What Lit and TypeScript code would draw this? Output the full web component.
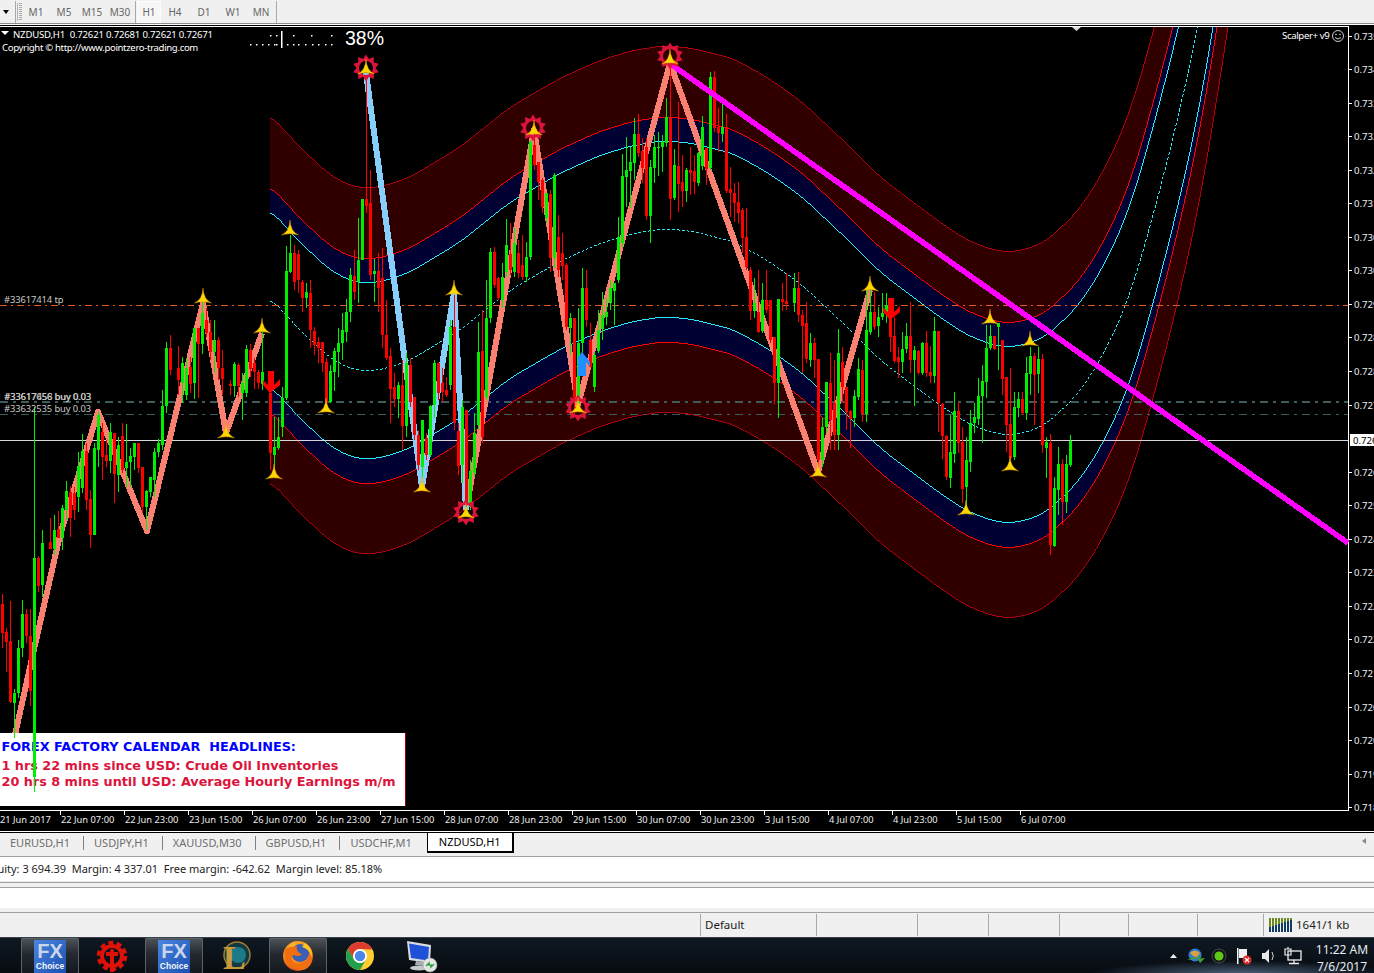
import {LitElement, html, svg, css} from 'lit';
import {customElement} from 'lit/decorators.js';

type Candle = {up: boolean; x: number; wt: number; bt: number; bb: number; wb: number};

// rows read off 3x crops: colour, crop x, wick top, body top, body bottom, wick bottom
function region(ox: number, oy: number, rows: string): Candle[] {
  return rows
    .trim()
    .split('\n')
    .map((row) => {
      const p = row.trim().split(/\s+/);
      const [zx, wt, bt, bb, wb] = p.slice(1).map(Number);
      const k = Math.round((ox + zx / 3 - 2.5) / 4);
      return {
        up: p[0] === 'g',
        x: 2 + 4 * k,
        wt: Math.round(oy + wt / 3),
        bt: Math.round(oy + bt / 3),
        bb: Math.round(oy + bb / 3),
        wb: Math.round(oy + wb / 3),
      };
    });
}

const CANDLES: Candle[] = [
  ...region(0, 480, `
    r 8 342 372 458 505
    r 19 445 457 485 575
    r 31 363 483 665 670
    g 43 627 638 668 775
    g 55 480 503 640 655
    g 67 360 402 505 530
    r 79 388 402 467 490
    r 91 388 467 633 678
    g 103 -219 233 891 935
    r 115 228 233 317 335
    g 127 150 190 315 350
    r 151 113 186 208 208
    g 163 105 150 207 225
    r 175 93 147 175 175
    g 187 75 85 175 210
    g 199 3 33 90 120`),
  ...region(0, 280, `
    r 211 617 635 715 770
    r 223 620 640 690 720
    g 235 515 558 650 695
    g 247 462 512 625 640
    r 259 490 512 660 690
    r 271 630 658 765 803
    g 283 490 505 765 765
    g 295 395 405 510 560
    r 307 430 455 530 600
    r 319 480 525 543 560
    g 331 430 455 543 580
    r 343 458 460 583 670
    g 355 470 495 585 635
    r 367 430 467 570 580
    g 379 432 545 565 620
    g 391 505 527 545 620
    g 403 490 490 530 570
    r 415 490 490 565 580
    r 427 560 560 680 700
    g 439 630 632 680 750
    g 451 590 590 635 650
    g 463 505 515 600 650
    g 475 478 490 515 530
    g 487 330 378 495 510
    g 499 185 205 378 400
    r 511 165 205 270 285
    r 535 197 263 300 345
    g 547 230 250 310 370
    g 559 235 265 345 360
    r 571 232 262 312 340
    g 583 145 145 310 358
    r 595 143 145 192 355
    g 607 60 100 192 222
    r 619 85 120 160 170
    r 631 120 155 215 240
    g 643 120 180 215 280
    r 655 170 180 265 300
    r 667 210 265 297 345
    r 691 300 312 318 345
    g 703 245 253 318 350
    r 715 250 255 318 350
    g 727 280 310 340 420
    g 739 195 208 338 350
    r 751 192 210 268 290
    r 763 235 250 275 328
    r 775 270 275 308 328
    g 787 155 275 312 330
    r 812 295 340 520 570`),
  ...region(260, 280, `
    g 44 410 500 525 575
    g 56 410 470 505 510
    g 68 320 355 440 470
    g 80 -103 -28 355 360
    g 92 -135 -80 -25 -20
    r 104 -105 -80 5 30
    r 116 -90 -78 0 40
    r 128 0 5 55 95
    g 140 10 35 55 85
    r 152 0 40 150 205
    r 164 140 152 195 225
    r 176 170 185 205 250
    r 188 185 185 250 275
    r 200 235 245 368 395
    g 212 255 272 365 370
    g 224 205 212 277 332
    g 236 145 190 217 290
    g 248 100 150 190 240
    g 260 58 97 155 185
    g 272 -35 -15 95 125
    r 284 -90 -12 35 60
    g 296 -185 -60 5 68
    g 307 -243 -243 -60 -60
    r 320 -605 -243 -223 -200
    r 332 -330 -230 -15 0
    g 344 -62 -28 -18 65
    r 356 -80 -28 25 95
    r 367 -95 -5 165 205
    r 379 60 165 235 240
    r 391 205 228 328 430
    r 403 280 322 357 380
    g 415 305 315 358 415
    r 427 240 315 437 510
    g 439 220 250 437 470
    r 451 235 255 365 380
    r 463 350 350 465 480
    r 475 450 465 555 570
    g 487 420 420 560 590
    r 499 460 475 525 540
    g 511 375 378 525 530
    g 523 240 250 375 415
    r 535 250 250 338 360
    r 547 265 310 335 365
    r 559 290 330 345 350
    g 571 120 140 315 330
    r 583 45 140 430 450
    r 595 430 452 558 585
    g 607 360 380 555 610
    r 619 390 390 670 680
    g 631 540 572 680 690
    g 643 400 460 580 590
    g 655 125 215 435 450
    r 667 90 212 470 490
    g 679 0 113 350 360
    g 691 -95 -83 115 130
    r 703 -100 -83 15 25
    r 715 -10 -5 55 60
    g 727 -50 -10 60 85
    g 739 -183 -105 -25 -10
    r 751 -170 -78 -30 -15
    g 763 -155 -110 -25 -10
    r 775 -120 -80 -20 -5
    r 787 -135 -45 -10 0
    g 799 -115 -70 -10 5
    g 811 -420 -415 -68 -60
    r 823 -440 -405 -345 -330
    r 835 -355 -355 -295 -240
    r 847 -305 -300 -218 -200
    g 859 -260 -260 -185 -170
    r 871 -270 -258 -65 -25
    g 883 -320 -315 -65 -35
    r 895 -195 -130 -30 -10
    r 907 -142 -80 -42 0
    r 919 -50 -45 140 150
    g 931 100 115 145 225
    r 943 115 115 355 410
    g 955 85 190 370 385
    g 967 -35 25 190 230
    r 979 -30 25 120 140
    r 991 130 180 260 260
    g 1003 215 225 320 335`),
  ...region(595, 270, `
    g 10 120 180 243 250
    g 22 65 135 178 210
    g 34 85 125 140 165
    g 46 30 55 98 120
    g 58 38 38 62 165`),
  ...region(600, 40, `
    g 55 530 590 720 730
    g 67 343 408 610 620
    g 79 290 390 410 500
    g 91 320 365 392 505
    g 103 235 282 368 420
    r 115 222 282 340 350
    r 127 295 333 385 430
    r 139 295 320 527 540
    g 151 360 380 527 610
    g 163 285 322 385 430
    g 175 275 322 325 407
    g 187 285 305 322 395
    g 199 175 230 308 320
    r 211 70 230 477 540
    g 223 327 375 475 480
    r 235 185 378 432 515
    r 247 345 425 452 500
    g 259 385 390 452 485
    r 271 320 390 400 465
    r 283 345 392 427 462
    g 295 335 338 430 437
    g 307 228 262 378 390
    r 319 325 325 388 435
    g 331 95 110 385 390
    r 343 92 110 265 275
    r 355 205 262 280 335
    g 367 183 260 282 305
    r 379 222 262 453 460
    r 391 380 447 460 530
    r 403 430 460 488 545
    r 415 425 487 520 550
    r 427 505 510 595 640
    r 439 505 592 680 690`),
  ...region(595, 270, `
    r 465 -10 0 122 150
    g 477 25 100 122 145
    r 490 0 125 185 190
    g 502 40 90 183 190
    r 514 0 90 120 130
    r 526 90 90 210 220
    r 538 200 200 338 402
    g 550 87 87 338 445`),
  ...region(780, 260, `
    r 8 70 118 125 152
    r 20 40 122 132 150
    g 44 40 85 130 155
    r 56 35 85 165 185
    r 68 150 165 197 340
    r 80 125 190 298 310
    g 92 220 250 300 320
    r 104 235 250 300 355
    r 116 297 297 600 630
    g 128 475 500 600 620
    g 140 365 365 500 520
    r 152 280 370 480 570
    r 164 300 430 525 570
    g 176 208 280 525 570
    r 188 262 307 380 430
    r 200 380 380 455 510
    r 212 450 452 478 563
    g 224 390 408 475 500
    g 236 295 327 410 420
    r 248 300 330 462 485
    g 260 85 210 462 485
    g 272 85 155 215 225
    r 284 95 155 202 210
    g 296 140 170 197 230
    g 308 100 160 170 180
    g 320 100 135 160 190
    r 332 115 115 230 275
    r 344 170 228 302 310
    r 356 260 292 305 355
    g 368 215 267 305 340
    g 380 190 228 267 280
    r 392 125 228 300 340
    g 404 258 270 300 437
    r 416 270 272 340 345
    g 428 245 250 340 345
    r 440 212 250 340 350
    r 452 258 335 347 370
    g 464 170 212 347 370
    r 476 212 212 430 515
    r 488 430 432 527 597
    r 500 525 527 650 660
    g 512 465 575 655 683
    g 524 395 452 582 610
    r 536 425 452 550 580
    r 548 500 545 687 730
    g 560 530 600 680 760
    g 572 450 490 605 635
    g 584 430 470 490 520
    g 596 355 407 477 495
    g 608 315 362 408 550
    g 620 195 265 365 415
    g 632 195 228 265 270
    r 644 228 228 267 270
    g 656 190 190 200 330
    r 668 240 240 357 405
    r 680 352 352 495 575
    r 692 325 492 595 600
    g 704 395 440 592 600
    g 716 395 417 445 470
    r 728 395 417 460 465
    g 740 290 340 460 480
    g 752 262 288 342 405
    r 764 280 288 345 495
    g 776 260 297 342 400
    r 788 282 297 555 580
    g 800 530 545 563 655
    r 812 522 550 855 885
    g 824 650 685 857 860
    g 836 562 612 690 765
    r 848 598 612 725 795
    g 860 585 612 725 760
    g 872 525 542 615 620`),
];

// centre line of the channel; every band curve is this plus a fixed offset
const MID: [number, number][] = [
  [270, 297], [293, 323], [327, 356], [353, 370], [380, 370], [410, 360], [460, 330], [510, 290],
  [560, 261], [600, 243], [633, 233], [665, 228], [693, 231], [733, 241], [767, 260], [800, 283],
  [847, 327], [880, 360], [937, 403], [967, 423], [997, 434], [1020, 434], [1047, 424], [1080, 392],
  [1105, 352], [1130, 296], [1155, 209], [1170, 150], [1180, 110], [1200, 18], [1213, -60], [1228, -155], [1245, -270],
];

function midAt(x: number): number {
  let i = 0;
  while (i < MID.length - 2 && MID[i + 1][0] < x) i++;
  const a = MID[i];
  const b = MID[i + 1];
  return a[1] + ((x - a[0]) / (b[0] - a[0])) * (b[1] - a[1]);
}

// knots are joined straight, then averaged over a window so no corners stay visible
function smoothAt(x: number): number {
  let sum = 0;
  for (let d = -12; d <= 12; d++) sum += midAt(Math.max(x + d, 270));
  return sum / 25;
}

const XS = Array.from({length: 976}, (_, i) => 270 + i);
const SMOOTH = XS.map(smoothAt);
const curve = (off: number) => XS.map((x, i) => [x, Math.round(SMOOTH[i] + off)]);
const line = (off: number) => curve(off).map((p) => p.join(',')).join(' ');
const band = (a: number, b: number) =>
  [...curve(a), ...curve(b).reverse()].map((p) => p.join(',')).join(' ');

const PRICES = [
  '0.73520', '0.73450', '0.73390', '0.73320', '0.73250', '0.73180', '0.73050', '0.73000',
  '0.72950', '0.72880', '0.72810', '0.72740', '', '0.72610', '0.72540', '0.72470',
  '0.72330', '0.72270', '0.72200', '0.72130', '0.72060', '0.72000', '0.71930', '0.71860',
];
const TIMES = [
  '22 Jun 07:00', '22 Jun 23:00', '23 Jun 15:00', '26 Jun 07:00', '26 Jun 23:00', '27 Jun 15:00',
  '28 Jun 07:00', '28 Jun 23:00', '29 Jun 15:00', '30 Jun 07:00', '30 Jun 23:00', '3 Jul 15:00',
  '4 Jul 07:00', '4 Jul 23:00', '5 Jul 15:00', '6 Jul 07:00',
];
const ARROWS: [number, number][] = [
  [203, 303], [262, 333], [290, 235], [326, 413], [226, 438], [274, 479], [454, 295], [422, 492],
  [366, 74], [534, 135], [466, 518], [578, 413], [670, 64], [818, 477], [870, 291], [990, 324],
  [1030, 346], [966, 515], [1010, 471],
];
const STARS: [number, number][] = [[366, 68], [533, 128], [466, 512], [578, 408], [670, 56]];
const DOTS = [250, 256, 262, 268, 274, 276, 287, 293, 298, 305, 312, 318, 325, 331];
const DOT_TOPS = [270, 276, 293, 311, 331];
const ZIGZAGS = [
  '15,735 35,645 60,535 98,412 147,531 203,303 226,433 262,333',
  '466,510 534,130 578,405 670,63 818,472 870,290',
];

function starPath(cx: number, cy: number): string {
  let d = '';
  for (let i = 0; i < 20; i++) {
    const r = i % 2 ? 9.5 : 13.5;
    const a = (i * Math.PI) / 10 - Math.PI / 2;
    d += `${i ? 'L' : 'M'}${(cx + r * Math.cos(a)).toFixed(1)},${(cy + r * Math.sin(a)).toFixed(1)}`;
  }
  return `${d}Z M${cx - 7},${cy} a7,7 0 1,0 14,0 a7,7 0 1,0 -14,0Z`;
}

@customElement('app-root')
export class AppRoot extends LitElement {
  static override styles = css`
    :host {
      display: block;
      width: 1374px;
      height: 973px;
      overflow: hidden;
      background: #f0f0f0;
      font-family: 'Noto Sans', sans-serif;
      font-size: 11px;
      color: #222;
    }

    .toolbar {
      display: flex;
      align-items: center;
      height: 23px;
      border-bottom: 1px solid #8c8c8c;
      box-shadow: 0 1px 0 #fff;
      margin-bottom: 1px;
    }
    .drop {
      width: 0;
      height: 0;
      margin: 0 5px 0 3px;
      border: 3.5px solid transparent;
      border-top: 4px solid #000;
      border-bottom: 0;
    }
    .grip {
      width: 4px;
      height: 18px;
      border-left: 1px solid #b4b4b4;
      background: repeating-linear-gradient(#aaa 0 1px, transparent 1px 2px) 1px 0 / 3px 100% no-repeat;
    }
    .tf {
      text-align: center;
      color: #666;
      font-size: 10px;
      line-height: 22px;
      height: 22px;
      box-sizing: border-box;
    }
    .tf.on {
      background: #f6f6f6;
      box-shadow: inset 0 0 0 1px #fdfdfd;
    }
    .tsep {
      width: 1px;
      height: 22px;
      background: #a8a8a8;
      margin: 0 1px;
    }

    .chart {
      height: 806px;
      background: #000;
      border-bottom: 1px solid #fff;
    }
    .chart svg {
      display: block;
    }
    .c {
      fill: #fff;
      font-size: 9.6px;
      letter-spacing: -0.2px;
      white-space: pre;
    }
    .c.tight {
      letter-spacing: -0.35px;
    }
    .axis {
      fill: #eee;
      font-size: 9.6px;
    }
    .axis.time {
      font-size: 9.3px;
    }
    .axis.on {
      fill: #000;
    }
    .order {
      fill: #c8c8c8;
      font-size: 9.4px;
      letter-spacing: -0.1px;
    }
    .pct {
      fill: #fff;
      font-family: 'Liberation Sans', sans-serif;
      font-size: 19.5px;
    }
    .news {
      font-family: 'DejaVu Sans', sans-serif;
      font-size: 12.8px;
      font-weight: 700;
      white-space: pre;
    }

    .tabs {
      display: flex;
      height: 25px;
      box-sizing: border-box;
      border-top: 1px solid #000;
      border-bottom: 1px solid #a0a0a0;
    }
    .tab {
      height: 14px;
      margin-top: 3px;
      padding: 0 13px 0 10px;
      line-height: 13px;
      color: #6e6e6e;
      border-right: 1px solid #808080;
    }
    .tab.last {
      border-right: 0;
      padding-right: 15px;
    }
    .tab.on {
      height: 18px;
      margin-top: 0;
      padding: 0 11px;
      line-height: 18px;
      background: #fff;
      color: #000;
      border: 1px solid #000;
      border-width: 0 2px 2px 1px;
    }
    .scroll {
      margin: 5px 8px 0 auto;
      width: 0;
      height: 0;
      border: 3px solid transparent;
      border-right: 4px solid #888;
      border-left: 0;
    }

    .account {
      height: 25px;
      background: #fff;
      border-bottom: 1px solid #ededed;
      box-sizing: border-box;
      line-height: 23px;
      white-space: pre;
      overflow: hidden;
      color: #222;
    }
    .account span {
      margin-left: -15.5px;
      display: inline-block;
    }
    .gap {
      height: 4px;
      border-top: 1px solid #a0a0a0;
      border-bottom: 1px solid #a0a0a0;
    }
    .blank {
      height: 20px;
      background: #fff;
      border-bottom: 1px solid #ededed;
    }
    .gap2 {
      height: 3px;
      border-bottom: 1px solid #a0a0a0;
    }

    .status {
      display: flex;
      height: 24px;
      align-items: center;
      background: #f0f0f0;
    }
    .cell {
      height: 22px;
      line-height: 22px;
      box-sizing: border-box;
      border-left: 1px solid #a8a8a8;
      padding-left: 4px;
      font-size: 11.5px;
    }
    .net {
      display: flex;
      align-items: center;
      gap: 3px;
      padding-left: 5px;
    }

    .taskbar {
      display: flex;
      height: 36px;
      padding-left: 21px;
      gap: 4px;
      background:
        radial-gradient(ellipse 150px 13px at 1240px 36px, rgba(98, 128, 160, 0.75), transparent),
        linear-gradient(#0f1922, #070b10);
      border-top: 1px solid #39424c;
      box-sizing: border-box;
    }
    .task {
      width: 58px;
      height: 36px;
      display: flex;
      justify-content: center;
      align-items: center;
    }
    .task.on {
      background: linear-gradient(#4d5358, #23292f 45%, #12181e);
      box-shadow: inset 0 0 0 1px #5c6268;
      border-radius: 2px;
    }
    .task svg {
      display: block;
    }
    .fx {
      fill: #ccd6ea;
      font-family: 'Liberation Sans', sans-serif;
      font-size: 20px;
      font-weight: 700;
    }
    .choice {
      fill: #f4f6fa;
      font-family: 'Liberation Sans', sans-serif;
      font-size: 8.5px;
      font-weight: 700;
    }
    .lol {
      fill: #c99a3c;
      font-family: 'Liberation Serif', serif;
      font-size: 34px;
      font-weight: 700;
    }
    .tray {
      margin-left: auto;
      display: flex;
      align-items: center;
      height: 35px;
    }
    .clock {
      width: 64px;
      padding-top: 4px;
      text-align: center;
      color: #e6ecf2;
      font-size: 12px;
      line-height: 17px;
    }
  `;

  private renderBands() {
    return svg`
      <g clip-path="url(#plot)" fill="none">
        <polygon points=${band(-183, -112)} fill="#300000" />
        <polygon points=${band(-112, -88)} fill="#000033" />
        <polygon points=${band(88, 113)} fill="#000033" />
        <polygon points=${band(113, 183)} fill="#300000" />
        <polyline points=${line(-183)} stroke="#b0000f" />
        <polyline points=${line(-112)} stroke="#ff0000" />
        <polyline points=${line(-88)} stroke="#22eeff" />
        <polyline points=${line(0)} stroke="#22eeff" stroke-dasharray="3 2" />
        <polyline points=${line(88)} stroke="#22eeff" />
        <polyline points=${line(113)} stroke="#ff0000" />
        <polyline points=${line(183)} stroke="#b0000f" />
      </g>
    `;
  }

  private renderCandles() {
    return CANDLES.map((c) => {
      const fill = c.up ? '#00ee00' : '#ff0000';
      return svg`
        <rect x=${c.x} y=${c.wt} width="1" height=${Math.max(c.wb - c.wt, 1)} fill=${fill} />
        <rect x=${c.x - 1} y=${c.bt} width="3" height=${Math.max(c.bb - c.bt, 1)} fill=${fill} />
      `;
    });
  }

  private renderChart() {
    return html`
      <svg width="1374" height="806" viewBox="0 25 1374 806">
        <defs>
          <clipPath id="plot"><rect x="0" y="27" width="1348" height="783" /></clipPath>
        </defs>
        <rect x="0" y="26" width="1349" height="1" fill="#fff" />
        <rect x="1348" y="26" width="1" height="785" fill="#fff" />
        <rect x="0" y="810" width="1349" height="1" fill="#fff" />
        <g shape-rendering="crispEdges">
          ${this.renderBands()}
          <line x1="0" x2="1348" y1="305.5" y2="305.5" stroke="#e05a20" stroke-dasharray="7 4 2 4" />
          <line x1="0" x2="1348" y1="402" y2="402" stroke="#3d5c5c" stroke-width="2" stroke-dasharray="8 5 3 5" />
          <line x1="0" x2="1348" y1="414.5" y2="414.5" stroke="#3d5c5c" stroke-dasharray="8 5 3 5" />
          <line x1="0" x2="1348" y1="440.5" y2="440.5" stroke="#d8d8d8" />
          ${ZIGZAGS.map(
            (p) => svg`
              <polyline points=${p} fill="none" stroke="#fa8072" stroke-width="6" stroke-linejoin="round" />
            `
          )}
          <polyline
            points="366,73 422,487 454,293 466,510"
            fill="none"
            stroke="#87cefa"
            stroke-width="6"
            stroke-linejoin="round"
          />
          <rect x="0" y="733" width="405" height="73" fill="#fff" />
          <rect x="405" y="733" width="1" height="73" fill="#a00000" />
          <text class="news" x="1.5" y="751" fill="#0000ff">FOREX FACTORY CALENDAR  HEADLINES:</text>
          <text class="news" x="1.5" y="770" fill="#dc143c">1 hrs 22 mins since USD: Crude Oil Inventories</text>
          <text class="news" x="1.5" y="786" fill="#dc143c">20 hrs 8 mins until USD: Average Hourly Earnings m/m</text>
          ${this.renderCandles()}
          <line x1="672" y1="65" x2="1348" y2="543" stroke="#ff00ff" stroke-width="5.5" />
        </g>
        <path d="M268,371H274V385L280,379V385L270,393L263,385V380L268,385Z" fill="#ff0000" />
        <path d="M888,298H894V312L900,306V312L890,320L883,312V307L888,312Z" fill="#ff0000" />
        <path d="M582,352L590,362V367L586,362V376H578V357Z" fill="#1e90ff" />
        ${STARS.map(([x, y]) => svg`<path d=${starPath(x, y)} fill="#dc143c" fill-rule="evenodd" />`)}
        ${ARROWS.map(
          ([x, y]) => svg`
            <path
              d="M${x},${y - 15}Q${x + 0.5},${y - 3.5} ${x + 8.5},${y}Q${x},${y - 2.5} ${x - 8.5},${y}Q${x - 0.5},${y - 3.5} ${x},${y - 15}Z"
              fill="#ffd700"
              stroke="#e89a00"
              stroke-width="0.4"
            />
          `
        )}
        <path d="M1,31h8l-4,4z" fill="#fff" />
        <path d="M1072,27h9l-4.5,4z" fill="#ddd" />
        <text class="c" x="13" y="38">NZDUSD,H1  0.72621 0.72681 0.72621 0.72671</text>
        <text class="c tight" x="2" y="51">Copyright © http://www.pointzero-trading.com</text>
        ${DOTS.map((x) => svg`<rect x=${x} y="44" width="1.5" height="1.5" fill="#fff" />`)}
        ${DOT_TOPS.map((x) => svg`<rect x=${x} y="35" width="1.5" height="1.5" fill="#fff" />`)}
        <rect x="281" y="31" width="1.5" height="17" fill="#fff" />
        <text class="pct" x="345" y="45">38%</text>
        <text class="c tight" x="1282" y="39">Scalper+ v9</text>
        <g fill="none" stroke="#fff" stroke-width="0.8">
          <circle cx="1338" cy="36" r="5.5" />
          <path d="M1335,37.5q3,3 6,0" />
        </g>
        <circle cx="1336" cy="34.5" r="0.7" fill="#fff" />
        <circle cx="1340" cy="34.5" r="0.7" fill="#fff" />
        <text class="order" x="4" y="303">#33617414 tp</text>
        <text class="order" x="4" y="400">#33617656 buy 0.03</text>
        <text class="order" x="4.4" y="400">#33617458 buy 0.03</text>
        <text class="order" x="4" y="412">#33632535 buy 0.03</text>
        ${PRICES.map((p, i) => {
          const y = Math.round(35.5 + 33.55 * i);
          return p
            ? svg`
                <rect x="1349" y=${y} width="3" height="1" fill="#fff" />
                <text class="axis" x="1354" y=${y + 4}>${p}</text>
              `
            : '';
        })}
        <rect x="1350" y="434" width="24" height="12" fill="#fff" />
        <text class="axis on" x="1353" y="444">0.72671</text>
        <text class="axis time" x="0" y="823">21 Jun 2017</text>
        ${TIMES.map(
          (t, i) => svg`
            <rect x=${60 + 64 * i} y="811" width="1" height="4" fill="#fff" />
            <text class="axis time" x=${61 + 64 * i} y="823">${t}</text>
          `
        )}
      </svg>
    `;
  }

  private renderFx() {
    return html`
      <svg width="32" height="33" viewBox="0 0 32 33">
        <defs>
          <linearGradient id="fxg" x1="0" y1="0" x2="1" y2="1">
            <stop offset="0" stop-color="#4a86e0" />
            <stop offset="1" stop-color="#1a4fb0" />
          </linearGradient>
        </defs>
        <rect width="32" height="33" fill="url(#fxg)" />
        <text class="fx" x="16" y="18" text-anchor="middle">FX</text>
        <text class="choice" x="16" y="29" text-anchor="middle">Choice</text>
      </svg>
    `;
  }

  private renderTaskbar() {
    return html`
      <div class="taskbar">
        <div class="task on">${this.renderFx()}</div>
        <div class="task">
          <svg width="34" height="34" viewBox="-17 -17 34 34">
            <circle r="13.5" fill="none" stroke="#e01208" stroke-width="3.5" stroke-dasharray="5 3.5" />
            <circle r="10" fill="none" stroke="#e01208" stroke-width="4" />
            <path d="M-6,-4H6V0H2V16H-2V0H-6Z" fill="#e01208" />
            <circle cy="-5" r="2" fill="#e01208" />
          </svg>
        </div>
        <div class="task on">${this.renderFx()}</div>
        <div class="task">
          <svg width="30" height="34" viewBox="0 0 30 34">
            <circle cx="16" cy="16" r="13" fill="#0f3a44" stroke="#a07a30" stroke-width="1.5" />
            <circle cx="17" cy="16" r="8" fill="#1b7a86" />
            <text class="lol" x="2" y="30">L</text>
          </svg>
        </div>
        <div class="task on">
          <svg width="32" height="32" viewBox="-16 -16 32 32">
            <defs>
              <radialGradient id="ffg" cx="0.4" cy="0.3" r="0.8">
                <stop offset="0" stop-color="#ffd23a" />
                <stop offset="0.6" stop-color="#f57a18" />
                <stop offset="1" stop-color="#d8381a" />
              </radialGradient>
            </defs>
            <circle r="15" fill="url(#ffg)" />
            <circle cx="2" cy="-3" r="9" fill="#3a5fb4" />
            <path
              d="M-13,-7C-15,4 -8,14 3,14C11,14 15,7 14,-1C12,7 5,10 -1,8C-7,6 -8,1 -4,-1C-1,1 3,0 4,-2C0,-3 -2,-6 -1,-10C-6,-9 -10,-9 -13,-7Z"
              fill="#f0700f"
            />
            <path d="M7,-13C13,-9 15,-4 14,2C13,-3 10,-7 4,-9Z" fill="#ffc21f" />
          </svg>
        </div>
        <div class="task">
          <svg width="30" height="30" viewBox="-15 -15 30 30">
            <circle r="14" fill="#ffcd2e" />
            <path d="M-12.1,-7A14,14 0 0 1 12.5,-6.5L0,-7A7,7 0 0 0 -6,3.5Z" fill="#dc3c30" />
            <path d="M-12.1,-7A14,14 0 0 0 0,14L6,3.5A7,7 0 0 1 -6,3.5Z" fill="#20a04c" />
            <circle r="7" fill="#fff" />
            <circle r="5.2" fill="#4a86e8" />
          </svg>
        </div>
        <div class="task">
          <svg width="32" height="34" viewBox="0 0 32 34">
            <path d="M1,2L25,6L24,24L3,21Z" fill="#d8dce0" />
            <path d="M3,4.5L23,8L22,21.5L5,19Z" fill="#1f50d8" />
            <path d="M10,22L18,23L19,27L9,26Z" fill="#a8aeb4" />
            <ellipse cx="13" cy="29" rx="9" ry="2.5" fill="#c4c8cc" />
            <circle cx="24" cy="26" r="7" fill="#e4e8e4" stroke="#9aa09a" stroke-width="0.6" />
            <path d="M20,27l3,-3v2h2M28,25l-3,3v-2h-2" fill="none" stroke="#2a9a40" stroke-width="1.4" />
          </svg>
        </div>
        <div class="tray">
          <svg width="140" height="24" viewBox="0 0 140 24">
            <path d="M0,14h7l-3.5,-4z" fill="#eee" />
            <circle cx="25" cy="11" r="6.5" fill="#2f7ad0" />
            <path d="M20,9q5,-5 10,0l-3,4l-4,-1z" fill="#d8a040" />
            <path d="M17,16q8,-5 15,-2l-3,-3v3h-2l3,5l5,-5" fill="#48a030" />
            <circle cx="49" cy="12" r="7" fill="#151515" stroke="#4a4a4a" />
            <circle cx="49" cy="12" r="4.5" fill="#5ec818" />
            <rect x="67" y="4" width="1.5" height="16" fill="#f4f4f4" />
            <path d="M69,5h8v9h-8z" fill="#f0f0f0" />
            <circle cx="77" cy="16" r="4.5" fill="#e02a2a" />
            <path d="M75,14l4,4M79,14l-4,4" stroke="#fff" stroke-width="1.2" />
            <path d="M92,9h3l4,-4v14l-4,-4h-3z" fill="#e8e8e8" />
            <path d="M102,8q2.5,4 0,8" fill="none" stroke="#d4d4d4" />
            <path d="M115,5h6v6h-6zM118,3v2" fill="none" stroke="#eee" stroke-width="1.2" />
            <rect x="118" y="7" width="13" height="9" fill="none" stroke="#eee" stroke-width="1.3" />
            <path d="M124,16v3M119,19.5h10" stroke="#eee" stroke-width="1.3" />
          </svg>
          <div class="clock">11:22 AM<br />7/6/2017</div>
        </div>
      </div>
    `;
  }

  override render() {
    const first = [['M1', 28], ['M5', 28], ['M15', 28], ['M30', 28]] as [string, number][];
    const second = [['H1', 24], ['H4', 28], ['D1', 30], ['W1', 28], ['MN', 28]] as [string, number][];
    const tf = (t: [string, number], on = false) =>
      html`<div class="tf ${on ? 'on' : ''}" style="width:${t[1]}px">${t[0]}</div>`;
    return html`
      <div class="toolbar">
        <div class="drop"></div>
        <div class="tsep"></div>
        <div class="grip"></div>
        ${first.map((t) => tf(t))}
        <div class="tsep"></div>
        ${second.map((t) => tf(t, t[0] === 'H1'))}
        <div class="tsep"></div>
      </div>
      <div class="chart">${this.renderChart()}</div>
      <div class="tabs">
        <div class="tab">EURUSD,H1</div>
        <div class="tab">USDJPY,H1</div>
        <div class="tab">XAUUSD,M30</div>
        <div class="tab">GBPUSD,H1</div>
        <div class="tab last">USDCHF,M1</div>
        <div class="tab on">NZDUSD,H1</div>
        <div class="scroll"></div>
      </div>
      <div class="account"><span>Equity: 3 694.39  Margin: 4 337.01  Free margin: -642.62  Margin level: 85.18%</span></div>
      <div class="gap"></div>
      <div class="blank"></div>
      <div class="gap2"></div>
      <div class="status">
        <div style="width:700px"></div>
        ${[116, 101, 71, 71, 69, 69, 66].map(
          (w, i) => html`<div class="cell" style="width:${w}px">${i === 0 ? 'Default' : ''}</div>`
        )}
        <div class="cell net">
          <svg width="24" height="14" viewBox="0 0 24 14">
            ${Array.from({length: 8}, (_, i) => {
              const x = i * 3;
              const split = 9 - i;
              return svg`
                <rect x=${x} y="0" width="2" height=${split} fill="#6d8a1e" />
                <rect x=${x} y=${split} width="2" height=${14 - split} fill="#123c62" />
              `;
            })}
          </svg>
          1641/1 kb
        </div>
      </div>
      ${this.renderTaskbar()}
    `;
  }
}

declare global {
  interface HTMLElementTagNameMap {
    'app-root': AppRoot;
  }
}
